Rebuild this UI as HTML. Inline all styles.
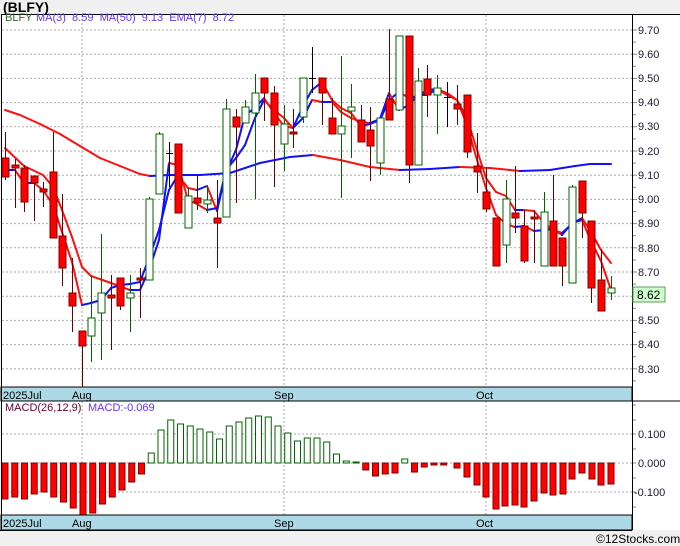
<!DOCTYPE html>
<html><head><meta charset="utf-8"><style>
html,body{margin:0;padding:0;background:#f0f0f0;width:680px;height:546px;overflow:hidden}
svg{display:block}
text{font-family:"Liberation Sans",sans-serif;font-size:11px}
</style></head><body>
<svg id="s" width="680" height="546" xmlns="http://www.w3.org/2000/svg">
<rect x="0" y="0" width="680" height="546" fill="#f0f0f0"/>
<text x="3" y="12" style="font-family:'Liberation Sans',sans-serif;font-size:14px;font-weight:bold" fill="#000">(BLFY)</text>
<rect x="1" y="14" width="679" height="516" fill="#fff"/>
<g id="grid"></g>
<g id="plot"></g>
<rect x="1" y="387" width="631" height="14" fill="#add8e6" stroke="#000" stroke-width="1"/>
<rect x="1" y="515" width="631" height="15" fill="#add8e6" stroke="#000" stroke-width="1"/>
<line x1="1" y1="14.5" x2="680" y2="14.5" stroke="#000"/>
<line x1="1.5" y1="14" x2="1.5" y2="530" stroke="#000"/>
<line x1="632.5" y1="14" x2="632.5" y2="530" stroke="#000"/>
<line x1="632" y1="401" x2="680" y2="401" stroke="#000"/>
<line x1="0" y1="530.5" x2="632" y2="530.5" stroke="#000"/>
<g fill="#000" style="font-size:12px">
<text x="3" y="399">2025Jul</text><text x="72" y="399">Aug</text><text x="274" y="399">Sep</text><text x="476" y="399">Oct</text>
<text x="3" y="527">2025Jul</text><text x="72" y="527">Aug</text><text x="274" y="527">Sep</text><text x="476" y="527">Oct</text>
</g>
<g fill="#1a1a33" style="font-size:12px">
<text x="638" y="34">9.70</text><text x="638" y="58">9.60</text><text x="638" y="82">9.50</text><text x="638" y="106">9.40</text>
<text x="638" y="130">9.30</text><text x="638" y="155">9.20</text><text x="638" y="179">9.10</text><text x="638" y="203">9.00</text>
<text x="638" y="227">8.90</text><text x="638" y="252">8.80</text><text x="638" y="276">8.70</text><text x="638" y="324">8.50</text>
<text x="638" y="348">8.40</text><text x="638" y="373">8.30</text>
<text x="638" y="438">0.100</text><text x="638" y="467">0.000</text><text x="634" y="496">-0.100</text>
</g>
<rect x="633" y="287" width="32" height="15" fill="#ccffcc" stroke="#669966"/>
<text x="637" y="299" fill="#000" style="font-size:12px">8.62</text>
<text x="5" y="21" fill="#336633">BLFY</text>
<text x="36" y="21" fill="#6633ff" xml:space="preserve">MA(3)  8.59  MA(50)  9.13  EMA(7)  8.72</text>
<text x="5" y="411" fill="#660033">MACD(26,12,9)</text>
<text x="88" y="411" fill="#6633ff">MACD:-0.069</text>
<text x="596" y="543" fill="#000" style="font-size:12px">©12Stocks.com</text>
</svg>
<script>
var NS="http://www.w3.org/2000/svg";
function el(p,t,a){var e=document.createElementNS(NS,t);for(var k in a)e.setAttribute(k,a[k]);p.appendChild(e);return e;}
var G=document.getElementById('grid'),P=document.getElementById('plot');
for(var i=0;i<15;i++){var y=30+i*24.2;el(G,'line',{x1:2,x2:632,y1:y,y2:y,stroke:'#aaa','stroke-dasharray':'2,2'});el(G,'line',{x1:632,x2:637,y1:y,y2:y,stroke:'#888'});el(G,'line',{x1:632,x2:636,y1:y+12.1,y2:y+12.1,stroke:'#888'});}
[434,463,492].forEach(function(y){el(G,'line',{x1:2,x2:632,y1:y,y2:y,stroke:'#aaa','stroke-dasharray':'2,2'});});
[405,420,434,449,463,478,492,507].forEach(function(y){el(G,'line',{x1:632,x2:636,y1:y,y2:y,stroke:'#888'});});
[82,284,486].forEach(function(x){el(G,'line',{x1:x,x2:x,y1:15,y2:387,stroke:'#aaa','stroke-dasharray':'2,2'});el(G,'line',{x1:x,x2:x,y1:401,y2:515,stroke:'#aaa','stroke-dasharray':'2,2'});});
function line(pts){for(var i=1;i<pts.length;i++){var a=pts[i-1],b=pts[i];el(P,'line',{x1:a[0],y1:a[1],x2:b[0],y2:b[1],stroke:(b[1]>a[1]?'#ff1010':'#1010ff'),'stroke-width':2,'stroke-linecap':'round'});}}
line([[5,110],[20,115],[40,124],[60,134],[80,146],[100,158],[120,166],[140,174],[150,176],[170,175],[200,175],[230,173],[260,163],[290,157],[313,155],[340,160],[370,167],[400,170],[430,169],[460,167],[490,168],[520,171],[550,170],[575,166],[590,164],[611,164]]);
line([[5,170],[15,170],[24,183],[34,183],[43,190],[53,205],[62,232],[72,262],[82,305],[91,303],[101,300],[111,288],[120,285],[130,284],[140,282],[149,258],[159,230],[169,190],[178,175],[188,188],[197,190],[207,186],[217,211],[226,172],[236,150],[245,115],[255,108],[264,98],[274,113],[284,126],[293,128],[303,106],[312,90],[322,82],[332,100],[341,108],[351,113],[361,126],[370,124],[380,120],[389,100],[399,92],[409,98],[418,96],[427,90],[437,89],[447,93],[457,100],[467,125],[477,160],[486,188],[496,215],[506,224],[515,227],[524,226],[534,231],[544,230],[553,229],[562,235],[572,223],[582,220],[591,241],[601,261],[611,290]]);
line([[5,148],[24,166],[43,175],[53,187],[62,210],[72,237],[82,267],[91,276],[111,283],[130,290],[140,290],[149,270],[159,240],[169,163],[178,165],[188,200],[197,204],[207,210],[217,208],[226,170],[236,158],[245,145],[255,118],[264,100],[274,110],[284,118],[293,128],[303,118],[312,100],[322,102],[332,102],[341,112],[351,118],[361,122],[370,123],[380,119],[389,93],[399,110],[409,105],[418,95],[427,95],[437,89],[447,95],[457,100],[467,118],[477,150],[486,178],[496,192],[506,196],[515,210],[524,210],[534,211],[544,223],[553,230],[562,233],[572,224],[582,218],[591,232],[601,250],[611,263]]);
var C=[[5,158,177,132,180,'r'],[15,165,168,159,208,'r'],[24,168,202,165,212,'r'],[34,176,183,176,221,'r'],[43,189,192,182,207,'r'],[53,172,238,132,238,'r'],[62,236,268,194,286,'r'],[72,293,306,258,332,'r'],[82,331,346,331,388,'r'],[91,318,336,276,362,'g'],[101,293,313,234,360,'g'],[111,295,298,275,350,'r'],[120,278,306,278,310,'r'],[130,293,298,275,332,'g'],[140,278,280,268,318,'r'],[149,199,280,197,280,'g'],[159,134,194,132,194,'g'],[169,153,153,142,187,'k'],[178,144,213,144,213,'r'],[188,196,228,188,228,'g'],[197,198,203,176,210,'r'],[207,200,204,185,213,'g'],[217,218,223,180,268,'r'],[226,109,217,99,217,'g'],[236,117,127,109,203,'r'],[245,107,123,100,123,'g'],[255,93,113,74,199,'g'],[264,78,93,78,121,'r'],[274,93,125,86,187,'r'],[284,124,144,105,171,'g'],[293,132,134,109,148,'r'],[303,78,117,78,123,'g'],[312,78,78,47,93,'k'],[322,78,93,78,125,'r'],[332,118,134,98,134,'r'],[341,126,134,56,198,'g'],[351,107,111,84,158,'g'],[361,120,142,105,142,'r'],[370,130,146,107,181,'r'],[380,118,163,118,175,'g'],[389,99,120,29,120,'r'],[399,36,110,36,110,'g'],[409,36,165,36,183,'r'],[418,81,165,68,165,'g'],[427,79,95,65,117,'r'],[437,88,95,75,134,'g'],[447,97,97,82,127,'k'],[457,104,109,85,125,'r'],[467,95,152,95,158,'r'],[477,166,172,133,193,'r'],[486,192,209,167,212,'r'],[496,218,266,218,266,'r'],[506,199,245,180,263,'g'],[515,213,218,166,233,'r'],[524,226,261,210,263,'r'],[534,217,219,210,263,'r'],[544,212,266,192,266,'g'],[553,221,266,175,266,'r'],[562,238,266,238,286,'r'],[572,187,283,185,283,'g'],[582,181,213,181,238,'r'],[591,221,288,221,303,'r'],[601,280,311,249,311,'r'],[611,288,293,276,300,'g']];
C.forEach(function(c){var x=c[0],t=c[5];var wc=t=='r'?'#6b0000':(t=='g'?'#006400':'#000');
el(P,'line',{x1:x+.5,x2:x+.5,y1:c[3],y2:c[4],stroke:wc});
if(t=='k'){el(P,'line',{x1:x-3,x2:x+4,y1:c[1]+.5,y2:c[1]+.5,stroke:'#000'});}
else el(P,'rect',{x:x-3,y:c[1],width:7,height:Math.max(c[2]-c[1],2),fill:t=='r'?'#ff0000':'#fff',stroke:t=='r'?'#800000':'#006400'});});
var L=[499,497,499,494,492,497,502,508,515,513,504,497,490,482,474,453,430,420,424,426,429,432,439,426,422,418,416,417,426,433,441,438,438,442,454,461,462,470,476,474,473,459,472,467,465,465];
var B=[];L.forEach(function(v,i){B.push([5+i*9.75,v]);});
[[457,468],[467,477],[477,485],[486,497],[496,509],[505,506],[515,505],[524,507],[534,501],[544,493],[553,495],[563,494],[572,479],[582,473],[592,479],[601,485],[611,484]].forEach(function(b){B.push(b);});
B.forEach(function(b){var x=b[0],y=b[1];if(y<463){el(P,'rect',{x:x-3,y:y,width:6,height:463-y,fill:'#fff',stroke:'#006400'});}else{el(P,'rect',{x:x-3,y:463,width:6,height:Math.max(y-463,1),fill:'#ff0000',stroke:'#800000'});}});
</script>
</body></html>
